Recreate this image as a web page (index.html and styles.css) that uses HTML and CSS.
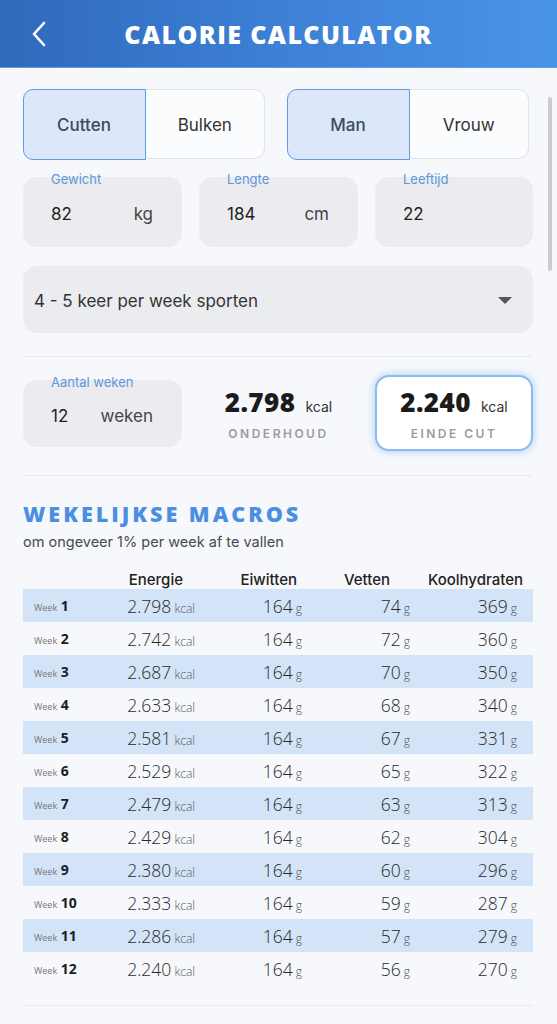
FILE: index.html
```html
<!DOCTYPE html>
<html lang="nl">
<head>
<meta charset="utf-8">
<title>Calorie Calculator</title>
<link rel="stylesheet" href="styles.css">
</head>
<body>
<header class="topbar">
  <button class="back" aria-label="Terug">
    <svg width="16" height="26" viewBox="0 0 16 26"><path d="M13 2 L3 13 L13 24" fill="none" stroke="#fff" stroke-width="2.6" stroke-linecap="round" stroke-linejoin="round"/></svg>
  </button>
  <h1 class="title">CALORIE CALCULATOR</h1>
</header>

<main class="content">
  <div class="toggles">
    <div class="segmented">
      <span class="seg active">Cutten</span>
      <span class="seg">Bulken</span>
    </div>
    <div class="segmented">
      <span class="seg active">Man</span>
      <span class="seg">Vrouw</span>
    </div>
  </div>

  <div class="trio">
    <div class="field"><span class="label">Gewicht</span><span class="val">82</span><span class="unit">kg</span></div>
    <div class="field"><span class="label">Lengte</span><span class="val">184</span><span class="unit">cm</span></div>
    <div class="field"><span class="label">Leeftijd</span><span class="val">22</span></div>
  </div>

  <div class="select">
    <span>4 - 5 keer per week sporten</span>
    <span class="caret"></span>
  </div>

  <hr class="rule">

  <div class="trio stats">
    <div class="field short"><span class="label">Aantal weken</span><span class="val">12</span><span class="unit">weken</span></div>
    <div class="stat">
      <div class="stat-num">2.798 <small>kcal</small></div>
      <div class="stat-cap">ONDERHOUD</div>
    </div>
    <div class="stat highlight">
      <div class="stat-num">2.240 <small>kcal</small></div>
      <div class="stat-cap">EINDE CUT</div>
    </div>
  </div>

  <hr class="rule">

  <h2 class="section-title">WEKELIJKSE MACROS</h2>
  <p class="section-sub">om ongeveer 1% per week af te vallen</p>

  <div class="table">
    <div class="thead">
      <span></span>
      <span class="h-e">Energie</span>
      <span class="h-p">Eiwitten</span>
      <span class="h-f">Vetten</span>
      <span class="h-c">Koolhydraten</span>
    </div>
    <div class="row"><span class="wk"><small>Week</small> 1</span><span class="c-e">2.798<small> kcal</small></span><span class="c-p">164<small> g</small></span><span class="c-f">74<small> g</small></span><span class="c-c">369<small> g</small></span></div>
    <div class="row"><span class="wk"><small>Week</small> 2</span><span class="c-e">2.742<small> kcal</small></span><span class="c-p">164<small> g</small></span><span class="c-f">72<small> g</small></span><span class="c-c">360<small> g</small></span></div>
    <div class="row"><span class="wk"><small>Week</small> 3</span><span class="c-e">2.687<small> kcal</small></span><span class="c-p">164<small> g</small></span><span class="c-f">70<small> g</small></span><span class="c-c">350<small> g</small></span></div>
    <div class="row"><span class="wk"><small>Week</small> 4</span><span class="c-e">2.633<small> kcal</small></span><span class="c-p">164<small> g</small></span><span class="c-f">68<small> g</small></span><span class="c-c">340<small> g</small></span></div>
    <div class="row"><span class="wk"><small>Week</small> 5</span><span class="c-e">2.581<small> kcal</small></span><span class="c-p">164<small> g</small></span><span class="c-f">67<small> g</small></span><span class="c-c">331<small> g</small></span></div>
    <div class="row"><span class="wk"><small>Week</small> 6</span><span class="c-e">2.529<small> kcal</small></span><span class="c-p">164<small> g</small></span><span class="c-f">65<small> g</small></span><span class="c-c">322<small> g</small></span></div>
    <div class="row"><span class="wk"><small>Week</small> 7</span><span class="c-e">2.479<small> kcal</small></span><span class="c-p">164<small> g</small></span><span class="c-f">63<small> g</small></span><span class="c-c">313<small> g</small></span></div>
    <div class="row"><span class="wk"><small>Week</small> 8</span><span class="c-e">2.429<small> kcal</small></span><span class="c-p">164<small> g</small></span><span class="c-f">62<small> g</small></span><span class="c-c">304<small> g</small></span></div>
    <div class="row"><span class="wk"><small>Week</small> 9</span><span class="c-e">2.380<small> kcal</small></span><span class="c-p">164<small> g</small></span><span class="c-f">60<small> g</small></span><span class="c-c">296<small> g</small></span></div>
    <div class="row"><span class="wk"><small>Week</small> 10</span><span class="c-e">2.333<small> kcal</small></span><span class="c-p">164<small> g</small></span><span class="c-f">59<small> g</small></span><span class="c-c">287<small> g</small></span></div>
    <div class="row"><span class="wk"><small>Week</small> 11</span><span class="c-e">2.286<small> kcal</small></span><span class="c-p">164<small> g</small></span><span class="c-f">57<small> g</small></span><span class="c-c">279<small> g</small></span></div>
    <div class="row"><span class="wk"><small>Week</small> 12</span><span class="c-e">2.240<small> kcal</small></span><span class="c-p">164<small> g</small></span><span class="c-f">56<small> g</small></span><span class="c-c">270<small> g</small></span></div>
  </div>

  <hr class="rule bottom">
</main>

<div class="scrollbar"></div>
</body>
</html>
```

FILE: styles.css
```css
* { box-sizing: border-box; }

html, body {
  margin: 0;
  padding: 0;
  background: #f6f8fc;
}

body {
  font-family: "Inter", "Noto Sans", sans-serif;
  color: #2b2b2b;
  width: 557px;
  height: 1024px;
  overflow: hidden;
  position: relative;
}

/* ---------- top bar ---------- */
.topbar {
  height: 68px;
  background: linear-gradient(90deg, #2f69ba 0%, #3d80d6 50%, #4a94e8 100%);
  display: flex;
  align-items: center;
  justify-content: center;
  position: relative;
  border-bottom: 1px solid #5d9de6;
}

.back {
  position: absolute;
  left: 31px;
  top: 21px;
  background: none;
  border: 0;
  padding: 0;
  width: 16px;
  height: 26px;
}

.title {
  margin: 0;
  color: #fff;
  font-family: "Open Sans", sans-serif;
  font-weight: 800;
  font-size: 25px;
  letter-spacing: 1.4px;
}

/* ---------- content ---------- */
.content {
  padding: 21px 24px 0 23px;
}

.toggles {
  display: grid;
  grid-template-columns: 242px 242px;
  column-gap: 22px;
}

.segmented {
  display: flex;
  height: 70px;
  border: 1.5px solid #dfe3ea;
  border-radius: 11px;
  background: #fbfcfe;
}

.seg {
  flex: 1;
  display: flex;
  align-items: center;
  justify-content: center;
  font-size: 17px;
  color: #333;
  padding-top: 2px;
}

.seg.active {
  background: #dce8f9;
  border: 1.5px solid #5e9be0;
  border-radius: 10px 0 0 10px;
  margin: -1.5px 0 -1.5px -1.5px;
  color: #3b4a62;
  font-weight: 500;
  flex: 0 0 123px;
}

.trio {
  display: grid;
  grid-template-columns: 159px 1fr 158px;
  column-gap: 17px;
  margin-top: 18px;
}

.field {
  position: relative;
  height: 70px;
  background: #ececf0;
  border-radius: 14px;
  display: flex;
  align-items: center;
  padding: 3px 29px 0 28px;
  font-size: 17px;
}

.field .label {
  position: absolute;
  left: 28px;
  top: -6px;
  font-size: 13px;
  color: #5e97da;
}

.field .val {
  flex: 1;
  color: #222;
}

.field .unit {
  color: #444;
}

.select {
  margin-top: 19px;
  height: 67px;
  background: #ebecf0;
  border-radius: 14px;
  display: flex;
  align-items: center;
  justify-content: space-between;
  padding: 2px 21px 0 11px;
  font-size: 17px;
  color: #333;
}

.caret {
  width: 0;
  height: 0;
  border-left: 7px solid transparent;
  border-right: 7px solid transparent;
  border-top: 7px solid #555;
}

.rule {
  border: 0;
  border-top: 1px solid #e6e9ee;
  margin: 23px 0 0;
}

/* ---------- stats row ---------- */
.stats {
  margin-top: 18px;
  align-items: center;
}

.field.short {
  height: 67px;
  padding-top: 6px;
}

.stat {
  display: flex;
  flex-direction: column;
  align-items: center;
  justify-content: center;
  height: 76px;
  padding-top: 3px;
}

.stat.highlight {
  background: #fff;
  border: 2px solid #8dbbef;
  border-radius: 14px;
  box-shadow: 0 0 8px rgba(110, 165, 235, 0.55);
}

.stat-num {
  font-family: "Open Sans", sans-serif;
  font-weight: 800;
  font-size: 26px;
  color: #1b1b1b;
  line-height: 28px;
  letter-spacing: 0.4px;
}

.stat-num small {
  font-family: "Inter", sans-serif;
  font-weight: 400;
  font-size: 14px;
  color: #333;
  margin-left: 3px;
  letter-spacing: 0;
}

.stat-cap {
  margin-top: 5px;
  font-size: 12px;
  font-weight: 600;
  letter-spacing: 2.5px;
  color: #9b9b9b;
}

.stats + .rule {
  margin-top: 24px;
}

/* ---------- weekly table ---------- */
.section-title {
  margin: 25px 0 0;
  font-family: "Open Sans", sans-serif;
  font-weight: 800;
  font-size: 21.5px;
  color: #4b8fe2;
  letter-spacing: 3px;
  line-height: 26px;
}

.section-sub {
  margin: 6px 0 0;
  font-size: 14.5px;
  line-height: 18px;
  color: #454a55;
}

.table {
  margin-top: 18px;
}

.thead,
.row {
  display: grid;
  grid-template-columns: 90px 100px 100px 110px 110px;
  align-items: center;
}

.thead {
  height: 20px;
  font-size: 15px;
  font-weight: 500;
  color: #222;
}

.thead span { text-align: right; }
.thead .h-e { padding-right: 30px; }
.thead .h-p { padding-right: 16px; }
.thead .h-f { padding-right: 33px; }
.thead .h-c { padding-right: 10px; }

.row {
  height: 33px;
  font-family: "Open Sans", sans-serif;
  font-weight: 300;
  font-size: 17.5px;
  color: #2a2a2a;
}

.row:nth-child(even) {
  background: #d3e3f8;
}

.row span { text-align: right; }
.row small { font-size: 12px; color: #555; }

.row .wk {
  text-align: left;
  padding-left: 11px;
  font-weight: 700;
  font-size: 14px;
  color: #1d1d1d;
}

.row .wk small {
  font-weight: 400;
  font-size: 9px;
  color: #777;
}

.row .c-e { padding-right: 18px; }
.row .c-p { padding-right: 11px; }
.row .c-f { padding-right: 13px; }
.row .c-c { padding-right: 16px; }

.rule.bottom {
  margin-top: 20px;
}

/* overlay scroll indicator */
.scrollbar {
  position: absolute;
  left: 548px;
  top: 97px;
  width: 4px;
  height: 174px;
  border-radius: 2px;
  background: #c9cbd0;
}
```
